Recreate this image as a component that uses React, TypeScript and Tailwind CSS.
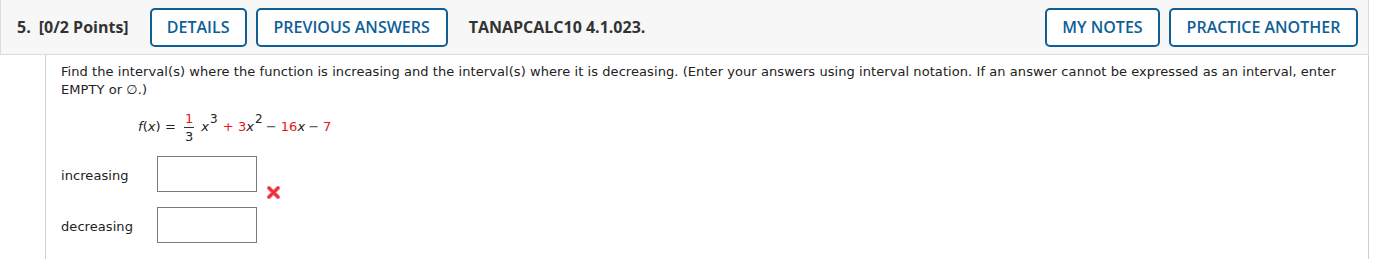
import React from 'react';

const HeaderButton: React.FC<{ label: string; className?: string }> = ({ label, className }) => (
  <button
    className={`h-[39px] rounded-[5px] border-2 border-[#0f5f96] bg-white text-[16px] font-semibold text-[#0f5f96] ${className ?? ''}`}
  >
    {label}
  </button>
);

const RedX: React.FC = () => (
  <svg width="13" height="13" viewBox="0 0 13 13" className="block">
    <path d="M2 2 L11 11 M11 2 L2 11" stroke="#f5707a" strokeWidth="4" strokeLinecap="round" />
    <path d="M2 2 L11 11 M11 2 L2 11" stroke="#ee2b3a" strokeWidth="2.4" strokeLinecap="round" />
  </svg>
);

const AnswerRow: React.FC<{ label: string; mark?: boolean }> = ({ label, mark }) => (
  <div className="flex h-[36px] items-start">
    <div className="w-[96px] pt-[11px] text-[13px] text-[#222]">{label}</div>
    <input className="h-[36px] w-[100px] border border-[#7a7a7a] bg-white outline-none" />
    {mark && (
      <div className="ml-[10px] mt-[30px]">
        <RedX />
      </div>
    )}
  </div>
);

const Sup: React.FC<{ n: string }> = ({ n }) => (
  <sup className="relative -top-[8px] ml-[1px] text-[12px] leading-none">{n}</sup>
);

const App: React.FC = () => {
  const verdana = { fontFamily: '"DejaVu Sans", Verdana, sans-serif' };
  return (
    <div className="w-[1369px] bg-white" style={{ fontFamily: '"Open Sans", sans-serif' }}>
      <div className="flex h-[55px] items-center border-x border-b border-[#dcdcdc] bg-[#f7f7f7] pl-[16px] pr-[10px]">
        <span className="text-[16px] font-bold text-[#333]">5.</span>
        <span className="ml-[8px] text-[16px] font-bold text-[#333]">[0/2 Points]</span>
        <HeaderButton label="DETAILS" className="ml-[21px] w-[97px]" />
        <HeaderButton label="PREVIOUS ANSWERS" className="ml-[9px] w-[192px]" />
        <span className="ml-[21px] text-[16px] font-bold text-[#333]">TANAPCALC10 4.1.023.</span>
        <div className="flex-1" />
        <HeaderButton label="MY NOTES" className="w-[115px]" />
        <HeaderButton label="PRACTICE ANOTHER" className="ml-[9px] w-[189px]" />
      </div>
      <div
        className="ml-[45px] h-[204px] border-x border-[#cfcfcf] pl-[15px] pt-[8px] text-[13px] leading-[18px] tracking-[0.07px] text-[#222]"
        style={verdana}
      >
        <p className="pr-[20px]">
          Find the interval(s) where the function is increasing and the interval(s) where it is decreasing. (Enter your answers using interval notation. If an answer cannot be expressed as an interval, enter EMPTY or ∅.)
        </p>
        <div className="ml-[77px] mt-[12px] flex h-[32px] items-center whitespace-pre text-[13px]">
          <span><i>f</i>(<i>x</i>) =</span>
          <span className="ml-[8px] inline-flex flex-col items-center leading-[15px]">
            <span className="px-[1px] text-[#e8141c]">1</span>
            <span className="my-[1px] h-px w-[10px] bg-[#333]" />
            <span className="px-[1px]">3</span>
          </span>
          <span className="ml-[7px]">
            <i>x</i>
            <Sup n="3" />
          </span>
          <span className="ml-[5px] text-[#e8141c]">+ 3</span>
          <span>
            <i>x</i>
            <Sup n="2" />
          </span>
          <span className="ml-[3px] text-[#444]">−</span>
          <span className="ml-[4px] text-[#e8141c]">16</span>
          <i>x</i>
          <span className="ml-[3px] text-[#444]">−</span>
          <span className="ml-[4px] text-[#e8141c]">7</span>
        </div>
        <div className="mt-[13px] flex flex-col gap-[15px]">
          <AnswerRow label="increasing" mark />
          <AnswerRow label="decreasing" />
        </div>
      </div>
    </div>
  );
};

export default App;
